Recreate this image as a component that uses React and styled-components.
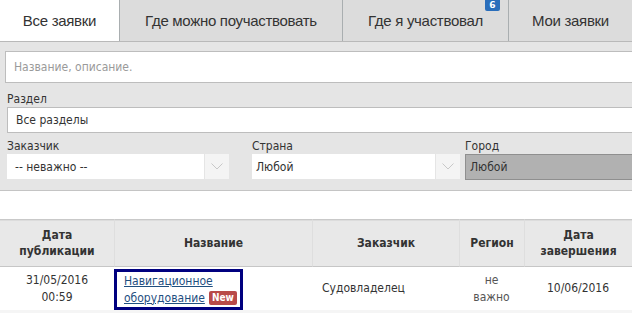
import React from "react";
import styled, { createGlobalStyle } from "styled-components";

const Global = createGlobalStyle`
  html, body { margin: 0; padding: 0; background: #fff; }
  body { font-family: "DejaVu Sans Condensed", "DejaVu Sans", sans-serif; color: #333; }
  * { box-sizing: border-box; }
`;

const Page = styled.div`
  width: 632px;
  height: 313px;
  overflow: hidden;
`;

const Tabs = styled.div`
  display: flex;
  height: 42px;
  border-bottom: 1px solid #b9b9b9;
  background: #dcdcdc;
`;

const Tab = styled.div`
  position: relative;
  width: ${p => p.$w}px;
  flex: ${p => (p.$grow ? "1" : "none")};
  display: flex;
  align-items: center;
  justify-content: center;
  font-family: "Liberation Sans", Arial, sans-serif;
  font-size: 15px;
  letter-spacing: -0.3px;
  color: #333;
  background: ${p => (p.$active ? "#fff" : "#dcdcdc")};
  border-right: ${p => (p.$last ? "none" : "1px solid #a9aeb0")};
  padding-bottom: 1px;
`;

const Badge = styled.span`
  position: absolute;
  top: 0;
  right: 8px;
  min-width: 15px;
  height: 11px;
  padding: 0 3px;
  background: #2a6ebb;
  color: #fff;
  font-family: "DejaVu Sans", sans-serif;
  font-size: 9px;
  font-weight: bold;
  letter-spacing: 0;
  line-height: 10px;
  text-align: center;
  border-radius: 0 0 2px 2px;
`;

const Panel = styled.div`
  background: #e5e5e5;
  padding: 9px 0 10px 0;
  border-bottom: 1px solid #c4c4c4;
`;

const Search = styled.div`
  margin-left: 5px;
  height: 32px;
  background: #fff;
  border: 1px solid #bdbdbd;
  border-right: none;
  display: flex;
  align-items: center;
  padding-left: 8px;
  font-size: 12px;
  color: #9a9a9a;
`;

const Field = styled.div`
  display: flex;
  flex-direction: column;
  width: ${p => (p.$w ? `${p.$w}px` : "auto")};
  flex: ${p => (p.$w ? "none" : "1")};
`;

const Label = styled.div`
  font-size: 12px;
  color: #333;
  height: 15px;
  line-height: 15px;
`;

const Section = styled.div`
  padding-left: 7px;
  margin-top: 9px;
`;

const TextBox = styled.div`
  height: 26px;
  background: #fff;
  border: 1px solid #bdbdbd;
  border-right: none;
  display: flex;
  align-items: center;
  padding-left: 8px;
  font-size: 12px;
  color: #333;
`;

const Row3 = styled.div`
  display: flex;
  padding-left: 7px;
  margin-top: 6px;
`;

const Select = styled.div`
  display: flex;
  height: 25px;
  width: ${p => p.$w}px;
`;

const SelectValue = styled.div`
  flex: 1;
  background: #fff;
  display: flex;
  align-items: center;
  padding-left: ${p => p.$pad}px;
  font-size: 12px;
  color: #333;
`;

const Arrow = styled.div`
  width: 24px;
  margin-left: 1px;
  background: #f4f4f4;
  display: flex;
  align-items: center;
  justify-content: center;
`;

const GraySelect = styled.div`
  height: 26px;
  background: #b1b1b1;
  border: 1px solid #8f8f8f;
  border-right: none;
  display: flex;
  align-items: center;
  padding-left: 4px;
  font-size: 12px;
  color: #333;
`;

const Gap = styled.div`
  height: 28px;
  background: #fff;
`;

const Table = styled.div`
  display: grid;
  grid-template-columns: 114px 198px 147px 65px 1fr;
`;

const Th = styled.div`
  height: 48px;
  background: #e8e8e8;
  border-top: 1px solid #c9c9c9;
  border-bottom: 1px solid #c6c6c6;
  border-left: ${p => (p.$first ? "none" : "1px solid #dedede")};
  display: flex;
  align-items: center;
  justify-content: center;
  text-align: center;
  font-weight: bold;
  font-size: 12px;
  line-height: 16px;
  color: #333;
  box-shadow: inset 0 1px 0 #dcdcdc;
`;

const Td = styled.div`
  height: 43px;
  background: #fff;
  display: flex;
  align-items: center;
  justify-content: ${p => p.$align || "center"};
  text-align: center;
  font-size: 12px;
  line-height: 17px;
  color: ${p => (p.$muted ? "#555" : "#333")};
  padding-left: ${p => p.$pl || 0}px;
`;

const LinkBox = styled.div`
  margin-top: 1px;
  width: 129px;
  height: 41px;
  border: 3px solid #00007f;
  padding: 1px 0 0 7px;
  font-size: 12px;
  line-height: 17px;
  text-align: left;
`;

const Link = styled.a`
  color: #1f4f7f;
  text-decoration: underline;
`;

const New = styled.span`
  display: inline-block;
  margin-left: 4px;
  padding: 0 3px;
  height: 14px;
  line-height: 14px;
  background: #b94a48;
  color: #fff;
  font-size: 10px;
  font-weight: bold;
  border-radius: 2px;
  vertical-align: 1px;
`;

const Footer = styled.div`
  height: 4px;
  background: #f5f5f5;
`;

const ChevronDown = () => (
  <svg width="12" height="7" viewBox="0 0 12 7">
    <path d="M0.5 0.5 L6 6 L11.5 0.5" fill="none" stroke="#c8c8c8" strokeWidth="1" />
  </svg>
);

export default function App() {
  return (
    <Page>
      <Global />
      <Tabs>
        <Tab $w={120} $active>Все заявки</Tab>
        <Tab $w={223}>Где можно поучаствовать</Tab>
        <Tab $w={166}>Где я участвовал<Badge>6</Badge></Tab>
        <Tab $grow $last>Мои заявки</Tab>
      </Tabs>
      <Panel>
        <Search>Название, описание.</Search>
        <Section>
          <Label>Раздел</Label>
          <TextBox>Все разделы</TextBox>
        </Section>
        <Row3>
          <Field $w={245}>
            <Label>Заказчик</Label>
            <Select $w={222}>
              <SelectValue $pad={8}>-- неважно --</SelectValue>
              <Arrow><ChevronDown /></Arrow>
            </Select>
          </Field>
          <Field $w={213}>
            <Label>Страна</Label>
            <Select $w={208}>
              <SelectValue $pad={4}>Любой</SelectValue>
              <Arrow><ChevronDown /></Arrow>
            </Select>
          </Field>
          <Field>
            <Label>Город</Label>
            <GraySelect>Любой</GraySelect>
          </Field>
        </Row3>
      </Panel>
      <Gap />
      <Table>
        <Th $first>Дата<br />публикации</Th>
        <Th>Название</Th>
        <Th>Заказчик</Th>
        <Th>Регион</Th>
        <Th>Дата<br />завершения</Th>
        <Td>31/05/2016<br />00:59</Td>
        <Td $align="flex-start">
          <LinkBox>
            <Link href="#">Навигационное<br />оборудование</Link>
            <New>New</New>
          </LinkBox>
        </Td>
        <Td $align="flex-start" $pl={10}>Судовладелец</Td>
        <Td $muted>не<br />важно</Td>
        <Td>10/06/2016</Td>
      </Table>
      <Footer />
    </Page>
  );
}
